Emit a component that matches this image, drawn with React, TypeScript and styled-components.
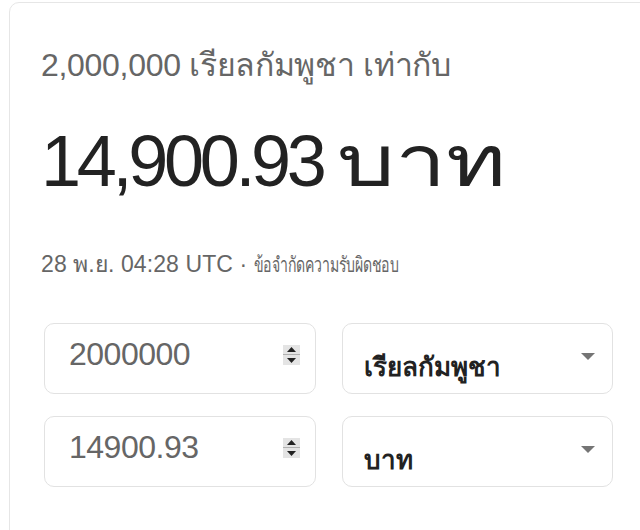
import React from 'react';
import styled, { createGlobalStyle } from 'styled-components';

const GlobalStyle = createGlobalStyle`
  html, body {
    margin: 0;
    padding: 0;
    background: #ffffff;
    overflow: hidden;
  }
  body {
    font-family: 'Liberation Sans', Arial, 'DejaVu Sans', 'Noto Sans', sans-serif;
  }
`;

const Card = styled.div`
  margin: 2px 0 0 9px;
  width: 680px;
  height: 560px;
  box-sizing: border-box;
  border: 1px solid #e6e6e6;
  border-radius: 10px;
  padding: 42px 0 0 31px;
`;

const FromLine = styled.div`
  font-size: 32px;
  line-height: 40px;
  color: #666666;
  letter-spacing: -0.3px;
`;

const Result = styled.div`
  margin-top: 36px;
  font-size: 72px;
  line-height: 80px;
  color: #222222;
  letter-spacing: -4.3px;
  white-space: nowrap;
`;

// thai glyphs in the reference come from a wider face than ours
const Wide = styled.span`
  display: inline-block;
  margin-left: 14px;
  letter-spacing: 0;
  transform: scaleX(1.27);
  transform-origin: left center;
`;

const Meta = styled.div`
  margin-top: 49px;
  font-size: 23px;
  line-height: 28px;
  color: #666666;
  letter-spacing: 0.1px;
  white-space: nowrap;
`;

const Narrow = styled.span`
  display: inline-block;
  font-size: 21px;
  letter-spacing: -0.3px;
  transform: scaleX(0.67);
  transform-origin: left center;
`;

const Rows = styled.div`
  margin: 44px 0 0 3px;
  display: flex;
  flex-direction: column;
  gap: 22px;
`;

const Row = styled.div`
  display: flex;
  gap: 26px;
`;

const AmountBox = styled.div`
  width: 272px;
  height: 71px;
  box-sizing: border-box;
  border: 1px solid #e2e2e2;
  border-radius: 10px;
  display: flex;
  align-items: center;
  padding: 0 15px 8px 24px;
`;

const AmountInput = styled.input`
  flex: 1;
  min-width: 0;
  border: none;
  outline: none;
  background: transparent;
  padding: 0;
  font-family: 'Liberation Sans', Arial, sans-serif;
  font-size: 32px;
  color: #666666;
  letter-spacing: -0.5px;
`;

const Spinner = styled.div`
  width: 17px;
  height: 20px;
  background: #e4e4e4;
  display: flex;
  flex-direction: column;
  align-items: center;
  justify-content: space-between;
  padding: 2px 0;
  box-sizing: border-box;
  position: relative;
  &::after {
    content: '';
    position: absolute;
    left: 0;
    right: 0;
    top: 9px;
    height: 1px;
    background: #b0b0b0;
  }
`;

const CurrencySelect = styled.div`
  width: 271px;
  height: 71px;
  box-sizing: border-box;
  border: 1px solid #e2e2e2;
  border-radius: 10px;
  display: flex;
  align-items: flex-end;
  padding: 0 17px 9px 21px;
  position: relative;
`;

const CurrencyName = styled.span`
  font-size: 26px;
  font-weight: bold;
  color: #222222;
  line-height: 34px;
`;

const Caret = styled.svg`
  position: absolute;
  right: 17px;
  top: 29px;
`;

const Arrow = ({ up }: { up?: boolean }) => (
  <svg width="9" height="5" viewBox="0 0 9 5">
    <path d={up ? 'M0 5 L4.5 0 L9 5 Z' : 'M0 0 L4.5 5 L9 0 Z'} fill="#222" />
  </svg>
);

const Converter = ({ amount, currency }: { amount: string; currency: string }) => (
  <Row>
    <AmountBox>
      <AmountInput type="text" defaultValue={amount} />
      <Spinner>
        <Arrow up />
        <Arrow />
      </Spinner>
    </AmountBox>
    <CurrencySelect>
      <CurrencyName>{currency}</CurrencyName>
      <Caret width="14" height="7" viewBox="0 0 14 7">
        <path d="M0 0 L14 0 L7 7 Z" fill="#757575" />
      </Caret>
    </CurrencySelect>
  </Row>
);

export default function App() {
  return (
    <>
      <GlobalStyle />
      <Card>
        <FromLine>2,000,000 เรียลกัมพูชา เท่ากับ</FromLine>
        <Result>
          14,900.93<Wide>บาท</Wide>
        </Result>
        <Meta>
          28 พ.ย. 04:28 UTC · <Narrow>ข้อจำกัดความรับผิดชอบ</Narrow>
        </Meta>
        <Rows>
          <Converter amount="2000000" currency="เรียลกัมพูชา" />
          <Converter amount="14900.93" currency="บาท" />
        </Rows>
      </Card>
    </>
  );
}
